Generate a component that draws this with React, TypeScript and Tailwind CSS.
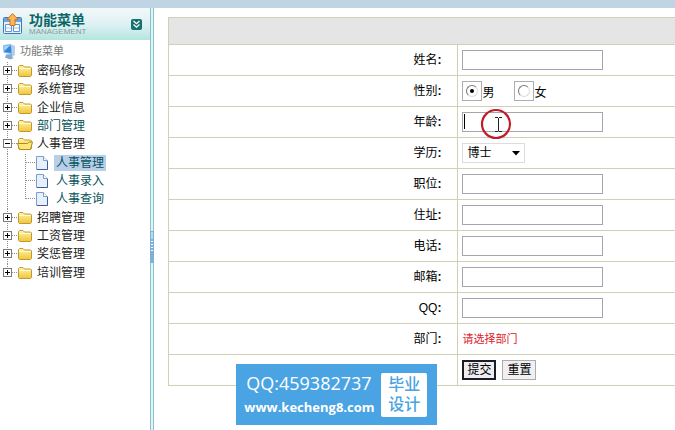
import React from 'react';

interface MenuItem {
  id: number;
  label: string;
  child?: boolean;
  open?: boolean;
  teal?: boolean;
  selected?: boolean;
}

const menu: MenuItem[] = [
  { id: 1, label: '密码修改' },
  { id: 2, label: '系统管理' },
  { id: 3, label: '企业信息' },
  { id: 4, label: '部门管理', teal: true },
  { id: 5, label: '人事管理', open: true },
  { id: 6, label: '人事管理', child: true, teal: true, selected: true },
  { id: 7, label: '人事录入', child: true, teal: true },
  { id: 8, label: '人事查询', child: true, teal: true },
  { id: 9, label: '招聘管理' },
  { id: 10, label: '工资管理' },
  { id: 11, label: '奖惩管理' },
  { id: 12, label: '培训管理' },
];

function PanelIcon() {
  return (
    <svg width="20" height="22" viewBox="0 0 20 22" className="shrink-0">
      <rect x="0.500" y="4.500" width="18" height="16" rx="1" fill="#e4f0fb" stroke="#3d78b8" />
      <rect x="1" y="5" width="17" height="4" fill="#6aa6e0" />
      <path d="M2.500 11.500H8.500V18.500H2.500zM10.500 11.500H16.500V18.500H10.500z" fill="#fff" stroke="#5f98d4" />
      <path d="M3 15H8M11 15H16" stroke="#9cc3e8" />
      <path d="M9.500 0.500L15 6.500H12V12.500H7V6.500H4z" fill="#fbb75c" stroke="#d0741c" />
    </svg>
  );
}

function ComputerIcon() {
  return (
    <svg width="13" height="16" viewBox="0 0 13 16" className="shrink-0">
      <path d="M0.500 1.500L8 0.500L9 9.500L1 8.500z" fill="#2f86dc" stroke="#8dbdf0" />
      <path d="M1 2L7.500 1L1.500 7z" fill="#a5d6fa" />
      <path d="M9 0.500L12 2V11L9 13z" fill="#b9cfe4" />
      <path d="M3 10.500L9 10V13L11 14L7 15.500L2 13.500z" fill="#86a9d0" />
    </svg>
  );
}

function FolderIcon({ open }: { open?: boolean }) {
  return (
    <svg width="16" height="14" viewBox="0 0 16 14" className="shrink-0">
      <defs>
        <linearGradient id="folder" x1="0" y1="0" x2="0" y2="1">
          <stop offset="0" stopColor="#fff5a8" />
          <stop offset="1" stopColor="#f0c53c" />
        </linearGradient>
      </defs>
      <path d="M1.500 11.500V2.500L2.500 1.500H6L7.500 3H13.500L14.500 4V11.500L13.500 12.500H2.500z" fill="url(#folder)" stroke="#c19a2c" />
      {open ? (
        <path d="M0.500 6.500H10.500L12 5H15.500L13.500 12.500H2.500z" fill="#fbe67a" stroke="#b08a20" />
      ) : (
        <path d="M2 4.500H14" stroke="#fffbd8" />
      )}
    </svg>
  );
}

function FileIcon() {
  return (
    <svg width="12" height="14" viewBox="0 0 12 14" className="shrink-0">
      <path d="M0.500 0.500H7.500L11.500 4.500V13.500H0.500z" fill="#e6effc" stroke="#7f9dcb" />
      <path d="M7.500 0.500V4.500H11.500" fill="#fff" stroke="#7f9dcb" />
      <path d="M1 13.500H11.500V5" fill="none" stroke="#3f5f98" />
    </svg>
  );
}

function Branch({ item, last }: { item: MenuItem; last: boolean }) {
  return (
    <svg width={item.child ? 36 : 17} height="18" className="shrink-0 overflow-visible">
      <g stroke="#8d8d8d" strokeDasharray="1 1" fill="none">
        <path d={last ? 'M7.500 0V9' : 'M7.500 0V19'} />
        {item.child ? (
          <path d={item.id === 8 ? 'M25.500 0V9M26 8.500H35' : 'M25.500 0V19M26 8.500H35'} />
        ) : (
          <path d="M12 8.500H17" />
        )}
      </g>
      {!item.child && (
        <>
          <rect x="3.500" y="4.500" width="8" height="8" fill="#fff" stroke="#7b7b7b" />
          <path d={item.open ? 'M5 8.500H10' : 'M5 8.500H10M7.500 6V11'} stroke="#000" />
        </>
      )}
    </svg>
  );
}

function Sidebar() {
  return (
    <aside className="w-[150px] shrink-0">
      <div className="flex h-8 items-center gap-1.5 bg-linear-to-b from-[#f3f8fb] via-[#dff1f3] to-[#b3e6e0] pr-2 pl-[3px]">
        <PanelIcon />
        <div className="flex-1">
          <h1 className="text-sm leading-4 font-bold whitespace-nowrap text-[#0b6767]">功能菜单</h1>
          <p className="text-[8px] leading-2 text-[#8a9a9c]">MANAGEMENT</p>
        </div>
        <button type="button" aria-label="收起" className="size-[11px] rounded-xs bg-[#17706f]">
          <svg width="11" height="11" viewBox="0 0 11 11" fill="none" stroke="#fff" strokeWidth="1.2">
            <path d="M2.500 2L5.500 4.800L8.500 2M2.500 5.500L5.500 8.300L8.500 5.500" />
          </svg>
        </button>
      </div>
      <div className="flex h-[22px] items-center gap-1 pt-px pl-[3px] text-[11px] text-[#777]">
        <ComputerIcon />
        功能菜单
      </div>
      <ul className="grid h-[220px] grid-rows-12 text-xs">
        {menu.map((item, i) => (
          <li key={item.id} className="flex min-h-0 items-center">
            <Branch item={item} last={i === menu.length - 1} />
            {item.child ? <FileIcon /> : <FolderIcon open={item.open} />}
            <a
              href="#"
              className={
                item.child
                  ? `ml-1.5 px-0.5 leading-4 ${item.selected ? 'bg-[#b8cfea]' : ''} text-[#07535a]`
                  : `ml-1 leading-4 ${item.teal ? 'text-[#07535a]' : 'text-[#222]'}`
              }
            >
              {item.label}
            </a>
          </li>
        ))}
      </ul>
    </aside>
  );
}

function Splitter() {
  return (
    <div className="flex w-1 shrink-0 flex-col border-x border-[#8dbfca] bg-[#dcf5f5] pt-[223px]">
      <svg width="4" height="32" className="-ml-px shrink-0">
        <rect width="4" height="32" fill="#7fb0d6" />
        <path d="M1 10.500H3M1 13.500H3M1 16.500H3M1 19.500H3" stroke="#fff" />
        <path d="M1 1H3V8H1z" fill="#b5d9ee" />
      </svg>
    </div>
  );
}

function Row({ label, htmlFor, children }: { label: string; htmlFor?: string; children: React.ReactNode }) {
  return (
    <tr className="h-[31px]">
      <th scope="row" className="border border-[#d0d0b4] pr-4 text-right font-normal">
        {label && <label htmlFor={htmlFor}>{label}<b>:</b></label>}
      </th>
      <td className="border border-r-0 border-[#d0d0b4] pl-1">{children}</td>
    </tr>
  );
}

function TextBox({ id }: { id: string }) {
  return <input id={id} type="text" className="block h-5 w-[141px] border border-[#a5a5b0] bg-white px-1 outline-none" />;
}

function Radio({ label, checked }: { label: string; checked?: boolean }) {
  return (
    <label className="flex items-center">
      <span className="flex size-5 items-center justify-center border border-[#adadad]">
        <input
          type="radio"
          name="gender"
          defaultChecked={checked}
          className="flex size-3 appearance-none items-center justify-center rounded-full border border-t-[#777] border-r-[#ddd] border-b-[#ddd] border-l-[#777] bg-white checked:before:size-1 checked:before:rounded-full checked:before:bg-black"
        />
      </span>
      <span className="pt-1">{label}</span>
    </label>
  );
}

// I-beam pointer inside the click ring, plus the text caret
function PointerMark() {
  return (
    <svg width="52" height="32" className="pointer-events-none absolute -top-1 left-0">
      <path d="M2.500 6V21" stroke="#000" />
      <circle cx="34" cy="16" r="14" fill="none" stroke="#bf1c28" strokeWidth="2.200" />
      <path d="M33 9.500H36M37 9.500H40M36.500 10V23M33 23.500H36M37 23.500H40" stroke="#222" fill="none" />
    </svg>
  );
}

function StaffForm() {
  return (
    <form onSubmit={(e) => e.preventDefault()}>
      <table className="w-full table-fixed border-collapse border border-r-0 border-[#d0d0b4] text-xs text-black">
        <thead>
          <tr className="h-[27px] bg-[#e5e5e5]">
            <th className="w-4/7" />
            <th />
          </tr>
        </thead>
        <tbody>
          <Row label="姓名" htmlFor="name"><TextBox id="name" /></Row>
          <Row label="性别">
            <div className="flex gap-5">
              <Radio label="男" checked />
              <Radio label="女" />
            </div>
          </Row>
          <Row label="年龄" htmlFor="age">
            <div className="relative">
              <TextBox id="age" />
              <PointerMark />
            </div>
          </Row>
          <Row label="学历" htmlFor="degree">
            <div className="relative w-[63px]">
              <select id="degree" className="block h-5 w-full appearance-none border border-[#dcdcdc] bg-white pl-1 outline-none">
                <option>博士</option>
              </select>
              <svg width="9" height="5" className="pointer-events-none absolute top-2 right-1">
                <path d="M0 0H8L4 4.500z" fill="#000" />
              </svg>
            </div>
          </Row>
          <Row label="职位" htmlFor="post"><TextBox id="post" /></Row>
          <Row label="住址" htmlFor="address"><TextBox id="address" /></Row>
          <Row label="电话" htmlFor="phone"><TextBox id="phone" /></Row>
          <Row label="邮箱" htmlFor="email"><TextBox id="email" /></Row>
          <Row label="QQ" htmlFor="qq"><TextBox id="qq" /></Row>
          <Row label="部门"><span className="text-[11px] text-[#e0202a]">请选择部门</span></Row>
          <Row label="">
            <div className="flex gap-1.5">
              <button type="submit" className="h-5 w-[34px] border-2 border-[#1c1c24] bg-[#efedf2] leading-4">提交</button>
              <button type="reset" className="h-5 w-[34px] border border-[#ababab] bg-[#f0eff2] leading-4">重置</button>
            </div>
          </Row>
        </tbody>
      </table>
    </form>
  );
}

function ContactBadge() {
  return (
    <div className="absolute top-[364px] left-[35%] flex h-[61px] w-[201px] items-center justify-between bg-[#4aa3e3] pr-2.5 pl-2 text-white">
      <div className="font-['Open_Sans',sans-serif] whitespace-nowrap">
        <p className="pl-0.5 text-lg leading-6">QQ:459382737</p>
        <p className="text-[13px] leading-6 font-bold">www.kecheng8.com</p>
      </div>
      <div className="flex h-11 w-[46px] items-center justify-center rounded-xs bg-white text-center text-base leading-5 font-medium text-[#4aa3e3]">
        毕业
        <br />
        设计
      </div>
    </div>
  );
}

export default function App() {
  return (
    <div className="relative flex min-h-screen flex-col overflow-hidden bg-white font-['Liberation_Sans','Noto_Sans_CJK_SC',sans-serif]">
      <div className="h-2 bg-[#bfd5e4]" />
      <div className="flex flex-1">
        <Sidebar />
        <Splitter />
        <main className="min-w-0 flex-1 pt-[9px] pl-3.5">
          <StaffForm />
        </main>
      </div>
      <ContactBadge />
    </div>
  );
}
